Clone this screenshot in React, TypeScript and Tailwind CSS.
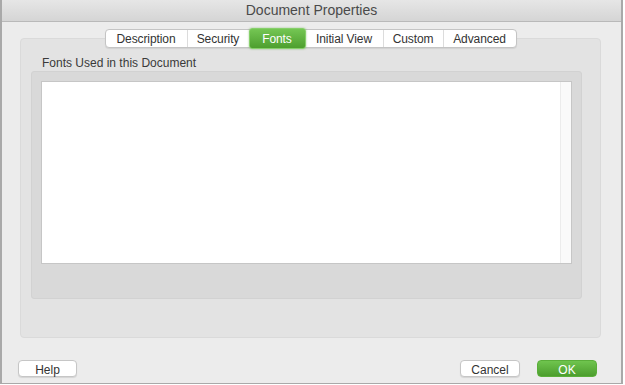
import React from "react"

const tabs = [
  { label: "Description", w: "w-[81px]" },
  { label: "Security", w: "w-[62px]" },
  { label: "Fonts", w: "w-[57px]" },
  { label: "Initial View", w: "w-[77px]" },
  { label: "Custom", w: "w-[60px]" },
  { label: "Advanced", w: "w-[73px]" },
]

export default function App() {
  return (
    <div className="w-[625px] h-[385px] bg-white font-['Liberation_Sans',Arial,sans-serif] text-[#333]">
      <div className="w-[623px] h-[384px] flex flex-col bg-[#ececec] border-l-2 border-r-2 border-b border-[#a9a9a9]">
        {/* title bar */}
        <div className="h-[22px] shrink-0 flex items-center justify-center bg-gradient-to-b from-[#e6e6e6] to-[#d5d5d5] border-b border-[#b9b9b9] text-[14px] text-[#4a4a4a]">
          Document Properties
        </div>

        <div className="flex-1 flex flex-col px-[16px] pt-[7px]">
          {/* tabs */}
          <div className="relative z-10 flex justify-center h-[20px] pr-[2px]">
            <div className="flex h-[19px] bg-white border border-[#c4c4c4] rounded-[4px] shadow-[0_1px_1px_rgba(0,0,0,0.08)] text-[12px] tracking-[-0.1px]">
              {tabs.map((t, i) =>
                t.label === "Fonts" ? (
                  <div
                    key={t.label}
                    className={`${t.w} -my-[2px] flex items-center justify-center rounded-[3px] bg-gradient-to-b from-[#74c653] to-[#4d9f2e] border border-[#86cf6a] text-white shadow-[0_0_2px_rgba(80,160,50,0.6)]`}
                  >
                    {t.label}
                  </div>
                ) : (
                  <div
                    key={t.label}
                    className={`${t.w} flex items-center justify-center ${i > 0 && tabs[i - 1].label !== "Fonts" ? "border-l border-[#dcdcdc]" : ""}`}
                  >
                    {t.label}
                  </div>
                )
              )}
            </div>
          </div>

          {/* tab panel */}
          <div className="-mt-[11px] h-[300px] ml-[2px] mr-[4px] bg-[#e3e3e3] border border-[#dadada] rounded-[4px] pl-[10px] pr-[18px] pt-[17px]">
            <div className="pl-[11px] text-[12px] leading-[14px] text-[#3a3a3a]">Fonts Used in this Document</div>
            <div className="mt-[1px] h-[228px] bg-[#d9d9d9] border border-[#d2d2d2] rounded-[3px] p-[9px]">
              <div className="h-[183px] bg-white border border-[#c6c6c6] flex justify-end">
                <div className="w-[11px] h-full bg-[#fafafa] border-l border-[#ececec]" />
              </div>
            </div>
          </div>

          {/* buttons */}
          <div className="mt-[22px] flex items-center">
            <button className="w-[59px] h-[17px] bg-white border border-[#c6c6c6] rounded-[4px] text-[12px] text-[#333] shadow-[0_1px_1px_rgba(0,0,0,0.1)]">
              Help
            </button>
            <div className="flex-1" />
            <button className="w-[60px] h-[17px] bg-white border border-[#c6c6c6] rounded-[4px] text-[12px] text-[#333] shadow-[0_1px_1px_rgba(0,0,0,0.1)]">
              Cancel
            </button>
            <button className="ml-[17px] mr-[8px] w-[60px] h-[17px] rounded-[4px] bg-gradient-to-b from-[#6fc44e] to-[#4c9e2d] border border-[#5aae3a] text-[12px] text-white">
              OK
            </button>
          </div>
        </div>
      </div>
    </div>
  )
}
